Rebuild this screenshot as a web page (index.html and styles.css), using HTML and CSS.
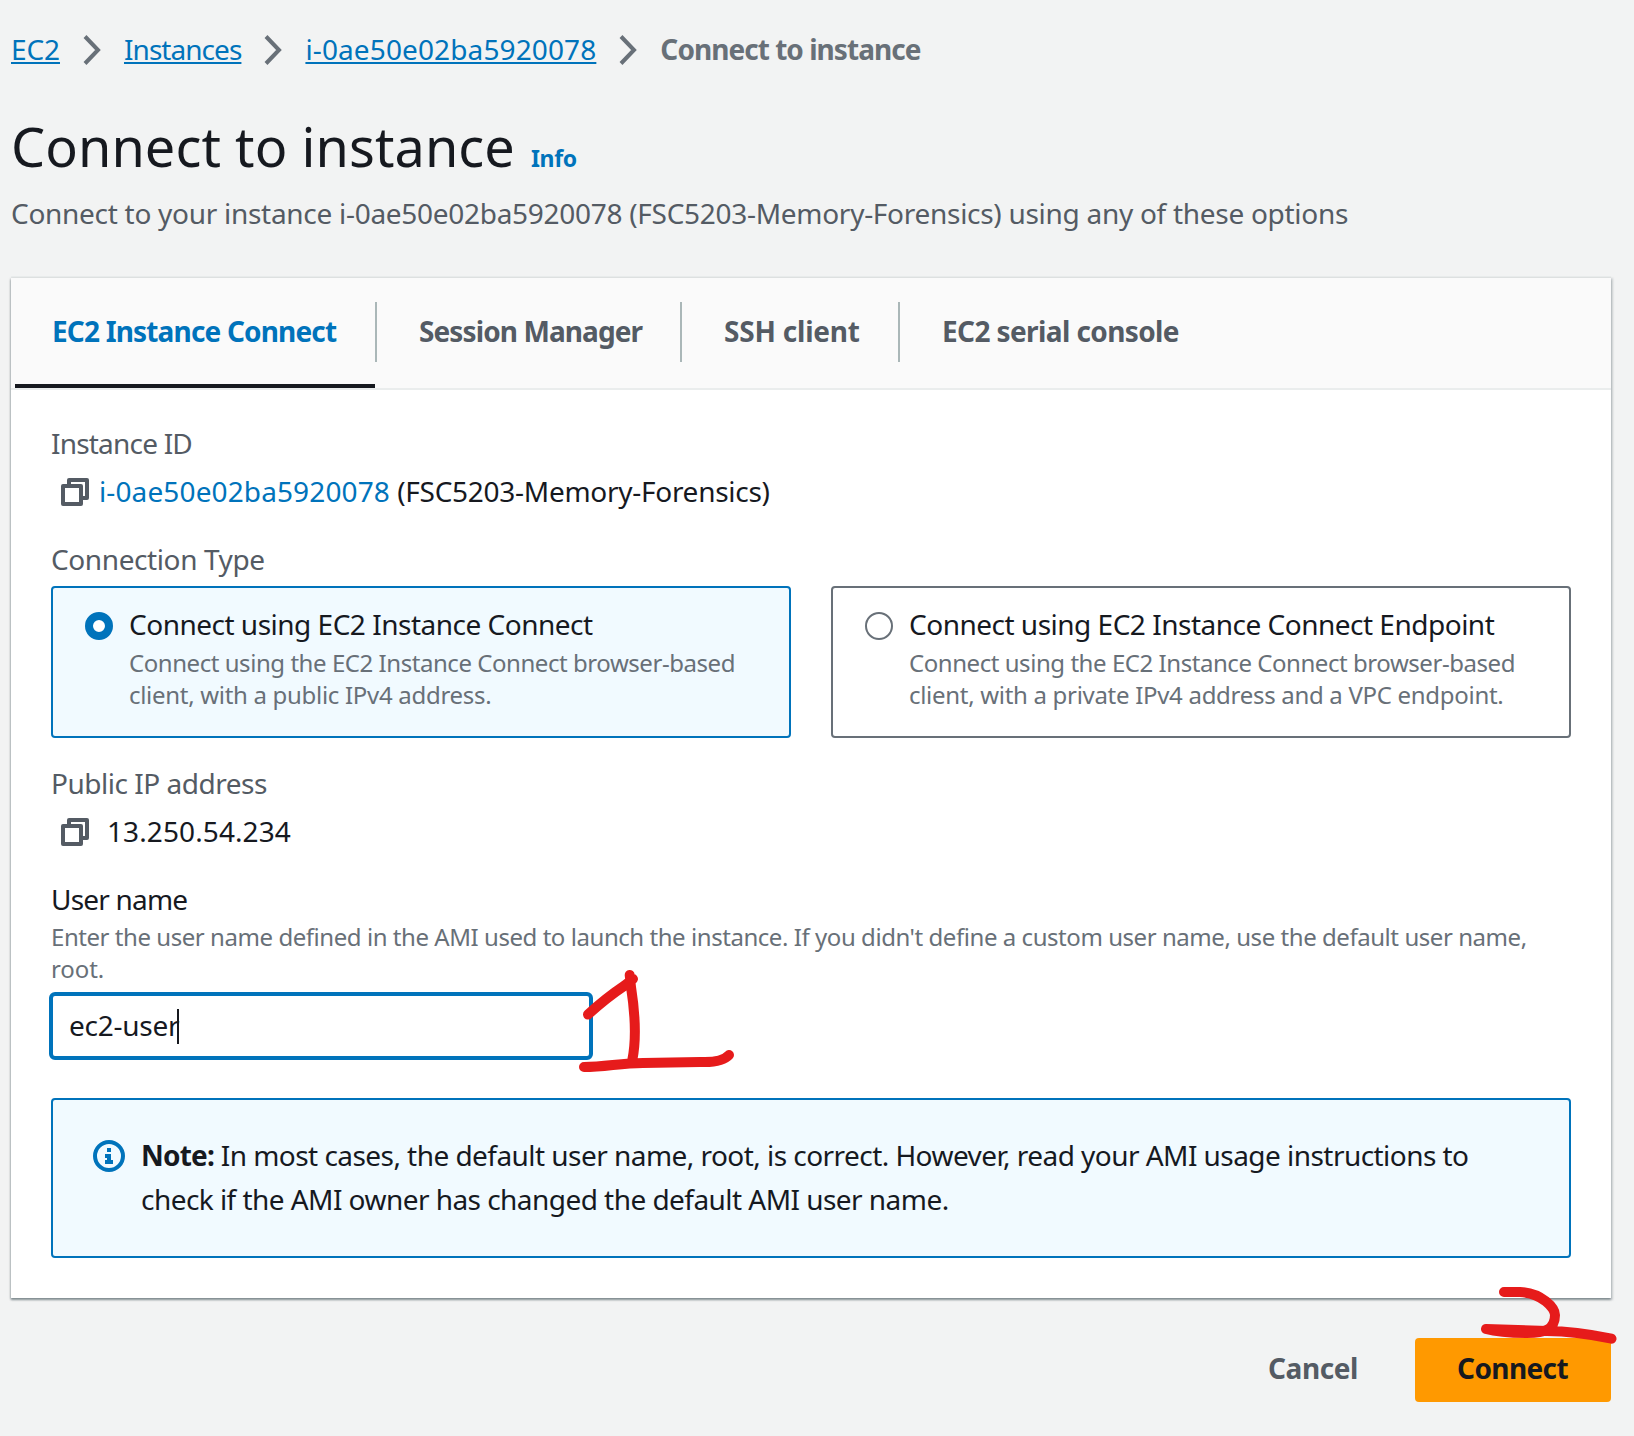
FILE: index.html
```html
<!DOCTYPE html>
<html lang="en">
<head>
<meta charset="utf-8">
<title>Connect to instance</title>
<link rel="stylesheet" href="styles.css">
</head>
<body>
<nav class="crumbs">
  <a class="crumb-link">EC2</a>
  <svg class="chevron" viewBox="0 0 18 30"><path d="M2 1.500 15 15 2 28.500"/></svg>
  <a class="crumb-link crumb-instances">Instances</a>
  <svg class="chevron" viewBox="0 0 18 30"><path d="M2 1.500 15 15 2 28.500"/></svg>
  <a class="crumb-link crumb-id">i-0ae50e02ba5920078</a>
  <svg class="chevron" viewBox="0 0 18 30"><path d="M2 1.500 15 15 2 28.500"/></svg>
  <span class="crumb-current">Connect to instance</span>
</nav>
<header class="page-head">
  <h1 class="title">Connect to instance</h1>
  <a class="info">Info</a>
</header>
<p class="subtitle">Connect to your instance i-0ae50e02ba5920078 (FSC5203-Memory-Forensics) using any of these options</p>
<main class="panel">
  <div class="tabs">
    <div class="tab tab-connect active">EC2 Instance Connect</div>
    <div class="tab tab-session">Session Manager</div>
    <div class="tab tab-ssh">SSH client</div>
    <div class="tab tab-serial">EC2 serial console</div>
  </div>
  <div class="body">
    <div class="label label-id">Instance ID</div>
    <div class="value">
      <svg class="copy" viewBox="0 0 28 28"><path d="M8 8V2h18v18h-6M2 8h18v18H2z"/></svg>
      <span class="value-text"><a class="id-link">i-0ae50e02ba5920078</a> <span class="id-name">(FSC5203-Memory-Forensics)</span></span>
    </div>
    <div class="label label-next label-type">Connection Type</div>
    <div class="options">
      <div class="option selected">
        <span class="radio"></span>
        <div class="option-text">
          <div class="option-title">Connect using EC2 Instance Connect</div>
          <div class="hint">Connect using the EC2 Instance Connect browser-based<br><span class="hint-loose">client, with a public IPv4 address.</span></div>
        </div>
      </div>
      <div class="option">
        <span class="radio"></span>
        <div class="option-text">
          <div class="option-title">Connect using EC2 Instance Connect Endpoint</div>
          <div class="hint">Connect using the EC2 Instance Connect browser-based<br><span class="hint-loose">client, with a private IPv4 address and a VPC endpoint.</span></div>
        </div>
      </div>
    </div>
    <div class="label label-ip">Public IP address</div>
    <div class="value">
      <svg class="copy" viewBox="0 0 28 28"><path d="M8 8V2h18v18h-6M2 8h18v18H2z"/></svg>
      <span class="value-text value-ip">13.250.54.234</span>
    </div>
    <div class="label label-next label-user">User name</div>
    <div class="hint hint-user">Enter the user name defined in the AMI used to launch the instance. If you didn't define a custom user name, use the default user name,<br><span class="hint-last">root.</span></div>
    <div class="input"><span>ec2-user</span><i class="caret"></i></div>
    <div class="note">
      <svg class="note-icon" viewBox="0 0 32 32"><circle cx="16" cy="16" r="14"/><path d="M14 8h4v4h-4zM12 14h6v6h2v4h-8v-4h2v-2h-2z"/></svg>
      <p class="note-text"><b class="note-lead">Note:</b> In most cases, the default user name, root, is correct. However, read your AMI usage instructions to<br>check if the AMI owner has changed the default AMI user name.</p>
    </div>
  </div>
</main>
<footer class="actions">
  <a class="cancel">Cancel</a>
  <a class="connect">Connect</a>
</footer>
<svg class="ink" viewBox="0 0 1634 1436">
  <path d="M588 1014.500Q606 998 624 986L633 979M629.700 975 631 987Q638 1032 632.300 1060M584 1067C606 1067 620 1063 643 1063L700 1062Q722 1063 729 1055"/>
  <path d="M1504 1292H1520C1542 1293 1555 1308 1555 1315C1555 1330 1544 1333 1527 1333Q1500 1333 1486 1329L1547 1331Q1575 1331 1611.500 1338.700"/>
</svg>
</body>
</html>
```
FILE: styles.css
```css
* { box-sizing: border-box; }
body { margin: 0; padding: 26px 23px 0 11px; width: 1634px; height: 1436px; overflow: hidden; background: #f2f3f3; color: #16191f; font: 28px/46px "Noto Sans", sans-serif; white-space: nowrap; }
h1, p { margin: 0; font-weight: 400; }
svg { display: block; flex: none; }
.crumbs { display: flex; align-items: flex-start; height: 44px; }
.crumb-link { color: #0073bb; text-decoration: underline; text-decoration-thickness: 2px; text-underline-offset: 2px; letter-spacing: -0.1px; }
.crumb-instances { letter-spacing: -0.95px; }
.crumb-id { letter-spacing: 0.12px; }
.crumb-current { color: #687078; font-weight: 700; letter-spacing: -0.96px; }
.chevron { width: 18px; height: 30px; margin: 9px 23px 0; fill: none; stroke: #687078; stroke-width: 4; }
.page-head { display: flex; align-items: baseline; gap: 16px; height: 72px; margin-top: 40px; }
.title { font-size: 54px; line-height: 73px; letter-spacing: 0.08px; }
.info { color: #0073bb; font-size: 23px; font-weight: 700; letter-spacing: -0.3px; }
.subtitle { height: 44px; margin-top: 8px; color: #545b64; letter-spacing: -0.286px; }
.panel { width: 1600px; height: 1020px; margin-top: 44px; background: #fff; box-shadow: 0 2px 2px 0 rgba(0,28,36,.3), 1px 1px 2px 1px rgba(0,28,36,.15), -1px 1px 2px 0 rgba(0,28,36,.15), 0 -2px 0 0 #eaeded; }
.tabs { display: flex; height: 112px; padding-left: 4px; background: #fafafa; border-bottom: 2px solid #eaeded; }
.tab { position: relative; height: 110px; padding-left: 44px; line-height: 106px; font-weight: 700; color: #545b64; }
.tab + .tab::before { content: ""; position: absolute; left: 0; top: 24px; width: 2px; height: 60px; background: #aab7b8; }
.tab-connect { width: 360px; padding-left: 36px; letter-spacing: -0.83px; }
.tab-connect { padding-left: 37px; }
.tab-session { width: 305px; letter-spacing: -0.9px; }
.tab-ssh { width: 218px; letter-spacing: -0.2px; }
.tab-serial { letter-spacing: -0.6px; }
.tab.active { color: #0073bb; }
.active::after { content: ""; position: absolute; left: 0; bottom: 0; width: 360px; height: 4px; background: #16191f; }
.body { padding: 30px 40px 40px; }
.label { height: 44px; color: #545b64; letter-spacing: -0.48px; }
.label-id { letter-spacing: -0.8px; }
.label-type { letter-spacing: -0.4px; }
.label-next { margin-top: 24px; }
.label-ip { margin-top: 22px; }
.label-user { color: #16191f; letter-spacing: -0.8px; }
.value { display: flex; align-items: flex-start; height: 44px; margin-top: 4px; padding-left: 10px; }
.copy { width: 28px; height: 28px; margin-top: 10px; fill: none; stroke: #545b64; stroke-width: 4; stroke-linejoin: round; }
.value-text { margin-left: 10px; }
.value-ip { margin-left: 18px; letter-spacing: 0.1px; }
.id-link { color: #0073bb; letter-spacing: 0.12px; }
.id-name { letter-spacing: -0.28px; }
.options { display: grid; grid-template-columns: 740px 740px; gap: 40px; margin-top: 6px; }
.option { display: flex; gap: 16px; height: 152px; padding: 18px 0 0 32px; border: 2px solid #687078; border-radius: 4px; }
.selected { border-color: #0073bb; background: #f1faff; }
.radio { flex: none; width: 28px; height: 28px; margin-top: 6px; border: 2px solid #687078; border-radius: 50%; background: #fff; }
.selected .radio { border: 8px solid #0073bb; }
.option-title { height: 36px; line-height: 37px; letter-spacing: -0.5px; }
.hint { color: #687078; font-size: 24px; line-height: 32px; letter-spacing: -0.447px; }
.hint-loose { letter-spacing: -0.3px; }
.hint-last { letter-spacing: -0.1px; }
.option .hint { margin-top: 5px; }
.hint-user { margin-top: 1px; }
.input { display: flex; width: 544px; height: 68px; margin: 7px 0 0 -2px; padding-left: 16px; border: 4px solid #0073bb; border-radius: 6px; line-height: 59px; background: #fff; letter-spacing: -0.25px; }
.caret { width: 2px; height: 35px; margin: 13px 0 0 -2px; background: #16191f; }
.note { display: flex; height: 160px; margin-top: 38px; padding: 32px 0 0 40px; border: 2px solid #0073bb; border-radius: 4px; background: #f1faff; }
.note-icon { width: 32px; height: 32px; margin: 8px 16px 0 0; fill: none; stroke: #0073bb; stroke-width: 4; }
.note-icon path { fill: #0073bb; stroke: none; }
.note-text { padding-top: 1px; line-height: 44px; letter-spacing: -0.545px; }
.note-lead { letter-spacing: -0.8px; }
.actions { display: flex; justify-content: flex-end; width: 1600px; height: 64px; margin-top: 40px; line-height: 61px; font-weight: 700; }
.cancel { margin-right: 57px; color: #545b64; letter-spacing: -0.4px; }
.connect { width: 196px; height: 64px; padding-left: 42px; border-radius: 4px; background: #ff9900; letter-spacing: -0.6px; }
.ink { position: absolute; left: 0; top: 0; width: 1634px; height: 1436px; fill: none; stroke: #e61b1b; stroke-width: 10; stroke-linecap: round; stroke-linejoin: round; }
```
